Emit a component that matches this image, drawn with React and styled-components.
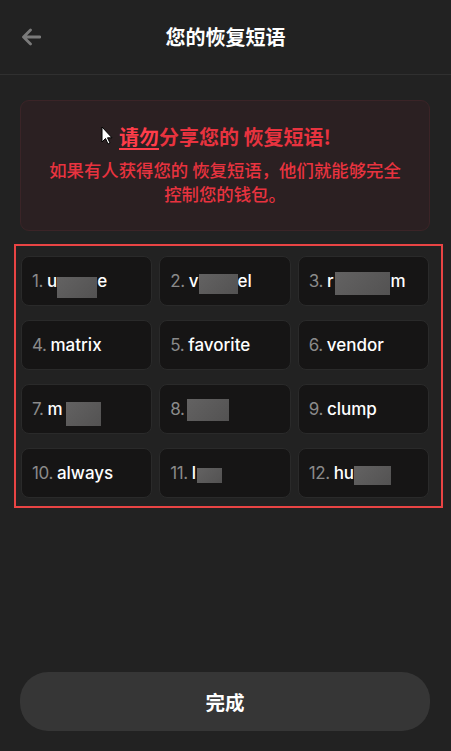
import React from "react";
import styled, { createGlobalStyle } from "styled-components";

const Global = createGlobalStyle`
  html, body { margin: 0; padding: 0; background: #222222; }
  body { font-family: Inter, "Noto Sans CJK SC", sans-serif; -webkit-font-smoothing: antialiased; }
  * { box-sizing: border-box; }
`;

const Page = styled.div`
  width: 451px;
  height: 751px;
  display: flex;
  flex-direction: column;
  background: #222222;
  color: #fff;
`;

const Header = styled.header`
  height: 75px;
  flex: none;
  display: grid;
  grid-template-columns: 60px 1fr 60px;
  align-items: center;
  border-bottom: 1px solid #303030;
`;

const BackButton = styled.button`
  background: none;
  border: none;
  padding: 0 0 0 21px;
  display: flex;
  align-items: center;
  color: #7a7a7a;
  cursor: pointer;
  height: 40px;
`;

const Title = styled.h1`
  margin: 0;
  text-align: center;
  font-family: "Noto Sans CJK SC", sans-serif;
  font-size: 20px;
  font-weight: 700;
  color: #ffffff;
  line-height: 28px;
`;

const Content = styled.main`
  flex: 1;
  display: flex;
  flex-direction: column;
  padding: 25px 21px 20px 20px;
`;

const Warning = styled.section`
  position: relative;
  background: #2b2022;
  border: 1px solid #3b2427;
  border-radius: 9px;
  padding: 22px 8px 24px;
  text-align: center;
  font-family: "Noto Sans CJK SC", sans-serif;
  color: #e8333f;
`;

const WarnTitle = styled.div`
  font-size: 20px;
  font-weight: 700;
  line-height: 28px;
  margin-bottom: 7px;
`;

const Emph = styled.span`
  color: #ff3d4a;
  text-decoration: underline;
  text-underline-offset: 3px;
  text-decoration-thickness: 2px;
`;

const WarnText = styled.p`
  margin: 0;
  font-size: 17.4px;
  line-height: 24px;
  font-weight: 500;
  white-space: nowrap;
`;

const Cursor = styled.svg`
  position: absolute;
  left: 80px;
  top: 25px;
`;

const Frame = styled.div`
  margin: 13px -13px 0 -6px;
  border: 2px solid #e94444;
  padding: 10px 12px 8px 5px;
`;

const Grid = styled.div`
  display: grid;
  grid-template-columns: repeat(3, 1fr);
  column-gap: 7px;
  row-gap: 14px;
`;

const Cell = styled.div`
  height: 50px;
  background: #161515;
  border: 1px solid #2a2a2a;
  border-radius: 8px;
  display: flex;
  align-items: center;
  padding: 0 10px;
  font-size: 17px;
  white-space: nowrap;
  overflow: hidden;
`;

const Num = styled.span`
  color: #8a8a8a;
  font-weight: 400;
  margin-right: 4px;
  letter-spacing: -0.4px;
`;

const Word = styled.span`
  display: inline-flex;
  align-items: center;
  height: 22px;
  color: #ffffff;
  font-weight: 500;
`;

const Mask = styled.span`
  flex: none;
  width: ${(p) => p.$w}px;
  height: ${(p) => p.$h}px;
  margin: -20px 0 -20px ${(p) => p.$ml || 0}px;
  transform: translateY(${(p) => p.$dy}px);
  background: linear-gradient(135deg, #636262, #535252);
`;

const Footer = styled.div`
  margin-top: auto;
`;

const DoneButton = styled.button`
  width: 100%;
  height: 59px;
  border: none;
  border-radius: 28px;
  background: #363636;
  color: #ffffff;
  font-family: "Noto Sans CJK SC", sans-serif;
  font-size: 19.5px;
  font-weight: 700;
  cursor: pointer;
`;

const words = [
  { pre: "u", mask: { w: 40, h: 21, dy: 6 }, post: "e" },
  { pre: "v", mask: { w: 39, h: 20, dy: 3 }, post: "el" },
  { pre: "r", mask: { w: 55, h: 23, dy: 2, ml: 2 }, post: "m" },
  { pre: "matrix" },
  { pre: "favorite" },
  { pre: "vendor" },
  { pre: "m", mask: { w: 35, h: 24, dy: 5, ml: 3 } },
  { pre: "", mask: { w: 42, h: 22, dy: 1, ml: -2 } },
  { pre: "clump" },
  { pre: "always" },
  { pre: "l", mask: { w: 25, h: 15, dy: 2, ml: 1 } },
  { pre: "hu", mask: { w: 37, h: 19, dy: 2 } },
];

export default function App() {
  return (
    <Page>
      <Global />
      <Header>
        <BackButton aria-label="返回">
          <svg width="20" height="18" viewBox="0 0 20 18" fill="none">
            <path d="M19 9H3M9.5 2L2.5 9l7 7" stroke="currentColor" strokeWidth="2.8" strokeLinecap="round" strokeLinejoin="round" />
          </svg>
        </BackButton>
        <Title>您的恢复短语</Title>
        <div />
      </Header>
      <Content>
        <Warning>
          <WarnTitle>
            <Emph>请勿</Emph>分享您的 恢复短语!
          </WarnTitle>
          <WarnText>
            如果有人获得您的 恢复短语，他们就能够完全
            <br />
            控制您的钱包。
          </WarnText>
          <Cursor width="12" height="19" viewBox="0 0 12 19">
            <path d="M1 1v15l3.5-3.5 2.5 5.5 2-1-2.5-5.2H11z" fill="#fff" stroke="#000" strokeWidth="1" strokeLinejoin="round" />
          </Cursor>
        </Warning>
        <Frame>
          <Grid>
            {words.map((w, i) => (
              <Cell key={i}>
                <Num>{i + 1}.</Num>
                <Word>
                  {w.pre}
                  {w.mask && <Mask $w={w.mask.w} $h={w.mask.h} $dy={w.mask.dy} $ml={w.mask.ml} />}
                  {w.post}
                </Word>
              </Cell>
            ))}
          </Grid>
        </Frame>
        <Footer>
          <DoneButton>完成</DoneButton>
        </Footer>
      </Content>
    </Page>
  );
}
